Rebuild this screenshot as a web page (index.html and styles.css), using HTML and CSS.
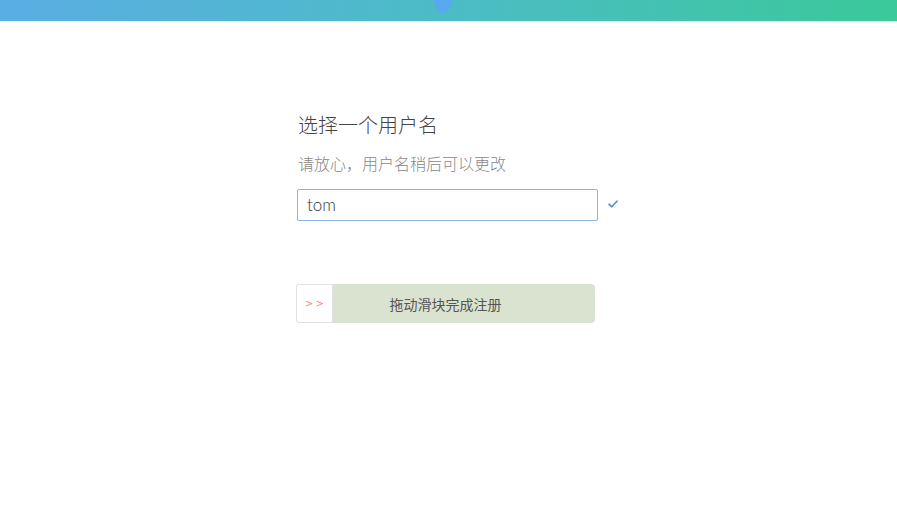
FILE: index.html
```html
<!DOCTYPE html>
<html lang="zh">
<head>
<meta charset="utf-8">
<link rel="stylesheet" href="styles.css">
</head>
<body>
<header class="topbar"><span class="drop"></span></header>
<main class="wrap">
  <h1 class="title">选择一个用户名</h1>
  <p class="sub">请放心，用户名稍后可以更改</p>
  <div class="field-row">
    <div class="input">tom</div>
    <svg class="check" width="10" height="8" viewBox="0 0 10 8"><path d="M1 4.2 L3.8 6.8 L9 1.2" fill="none" stroke="#4f8fcf" stroke-width="1.6" stroke-linecap="round" stroke-linejoin="round"/></svg>
  </div>
  <div class="slider">
    <div class="handle">&gt;&gt;</div>
    <div class="slider-text">拖动滑块完成注册</div>
  </div>
</main>
</body>
</html>
```
FILE: styles.css
```css
* { box-sizing: border-box; }
html, body { margin: 0; padding: 0; background: #fff; }
body { font-family: "Noto Sans CJK SC", "Noto Sans", sans-serif; }
.topbar {
  height: 21px;
  background: linear-gradient(90deg, #5aaee3 0%, #4cbcc6 50%, #3bc99a 100%);
  position: relative;
  box-shadow: 0 1px 2px rgba(0,0,0,0.08);
}
.drop {
  position: absolute;
  left: 434px;
  top: -8px;
  width: 18px;
  height: 21px;
  border-radius: 50% 50% 50% 50% / 40% 40% 60% 60%;
  background: #58a9ee;
}
.wrap {
  width: 340px;
  margin-left: 297px;
  padding-top: 89px;
}
.title {
  margin: 0;
  font-size: 20px;
  font-weight: 300;
  color: #444;
  line-height: 30px;
  padding-left: 1px;
}
.sub {
  margin: 11px 0 0;
  font-size: 16px;
  font-weight: 300;
  color: #888;
  line-height: 24px;
  padding-left: 1px;
}
.field-row {
  margin-top: 14px;
  display: flex;
  align-items: center;
}
.input {
  flex: 0 0 301px;
  width: 301px;
  height: 32px;
  border: 1px solid #8db3e6;
  border-radius: 2px;
  padding-left: 9px;
  font-family: "Lato", "Open Sans", sans-serif;
  font-weight: 300;
  font-size: 17px;
  color: #333;
  line-height: 30px;
}
.check { margin-left: 10px; margin-top: -2px; flex: none; }
.slider {
  margin-top: 63px;
  margin-left: -1px;
  width: 299px;
  height: 39px;
  background: #dae3d0;
  border-radius: 4px;
  position: relative;
  display: flex;
  align-items: center;
  justify-content: center;
}
.handle {
  position: absolute;
  left: 0;
  top: 0;
  width: 37px;
  height: 39px;
  background: #fff;
  border: 1px solid #e2e2e2;
  border-radius: 3px 0 0 3px;
  color: #f08a8a;
  font-family: "DejaVu Sans", sans-serif;
  font-size: 10px;
  letter-spacing: 2px;
  display: flex;
  align-items: center;
  justify-content: center;
  padding-left: 2px;
}
.slider-text {
  font-size: 14px;
  color: #555;
}
```
